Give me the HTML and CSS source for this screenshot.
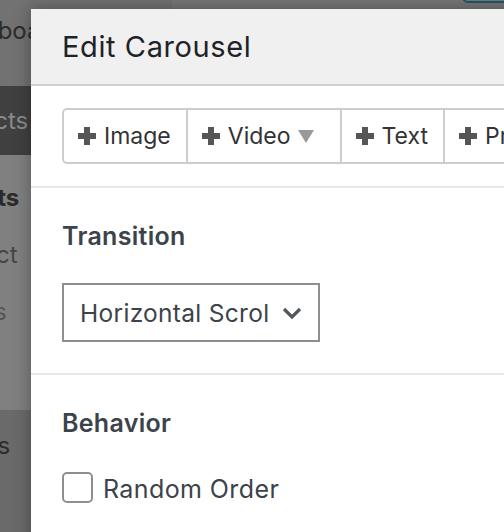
FILE: index.html
```html
<!DOCTYPE html>
<html lang="en">
<head>
<meta charset="utf-8">
<title>Edit Carousel</title>
<link rel="stylesheet" href="styles.css">
</head>
<body>
<div class="screen">
  <div class="admin">
    <aside class="sidebar">
      <div class="menu-item dash"><span class="lbl lbl-dash">Dashboard</span></div>
      <div class="menu-item current"><span class="lbl lbl-prod">Products</span></div>
      <div class="submenu">
        <div class="sub-item strong"><span class="lbl lbl-all">All Products</span></div>
        <div class="sub-item mid"><span class="lbl lbl-add">Add Product</span></div>
        <div class="sub-item light"><span class="lbl lbl-tags">Tags</span></div>
      </div>
      <div class="menu-item after"><span class="lbl lbl-pages">Pages</span></div>
    </aside>
    <main class="content">
      <div class="topbar"><span class="publish"></span></div>
    </main>
  </div>

  <div class="modal">
    <header class="modal-header">
      <h1 class="modal-title">Edit Carousel</h1>
    </header>

    <div class="toolbar-section">
      <div class="toolbar">
        <div class="tool tool-image">
          <svg class="plus" viewBox="0 0 18 18" width="18" height="18"><path d="M6 0h6v6h6v6h-6v6h-6v-6h-6v-6h6z"/></svg>
          <span>Image</span>
        </div>
        <div class="tool tool-video">
          <svg class="plus" viewBox="0 0 18 18" width="18" height="18"><path d="M6 0h6v6h6v6h-6v6h-6v-6h-6v-6h6z"/></svg>
          <span>Video</span>
          <svg class="caret" viewBox="0 0 16 13" width="16" height="13"><path d="M0 0h16l-8 13z"/></svg>
        </div>
        <div class="tool tool-text">
          <svg class="plus" viewBox="0 0 18 18" width="18" height="18"><path d="M6 0h6v6h6v6h-6v6h-6v-6h-6v-6h6z"/></svg>
          <span>Text</span>
        </div>
        <div class="tool tool-product">
          <svg class="plus" viewBox="0 0 18 18" width="18" height="18"><path d="M6 0h6v6h6v6h-6v6h-6v-6h-6v-6h6z"/></svg>
          <span>Product</span>
        </div>
      </div>
    </div>

    <section class="section">
      <h2 class="section-title">Transition</h2>
      <div class="select">
        <span class="select-value">Horizontal Scrolling</span>
        <svg class="chevron" viewBox="0 0 20 14" width="20" height="14"><path d="M2 3l8 8 8-8" fill="none" stroke="#50575e" stroke-width="3.2"/></svg>
      </div>
    </section>

    <section class="section last">
      <h2 class="section-title">Behavior</h2>
      <label class="check-row">
        <span class="check"></span>
        <span class="check-label">Random Order</span>
      </label>
    </section>
  </div>
</div>
</body>
</html>
```

FILE: styles.css
```css
* { box-sizing: border-box; }

body {
  margin: 0;
  font-family: Inter, "Noto Sans", sans-serif;
}

.screen {
  position: relative;
  width: 504px;
  height: 532px;
  overflow: hidden;
  background: #777;
}

.admin {
  display: flex;
  height: 100%;
}

/* left admin menu, dimmed by the modal backdrop */
.sidebar {
  flex: 0 0 242px;
  margin-left: -70px;
  display: flex;
  flex-direction: column;
  background: #6c6c6c;
  font-size: 24px;
  line-height: 28px;
  white-space: nowrap;
}

.menu-item {
  display: flex;
  color: #2c2c2c;
}

.dash {
  height: 86px;
  padding-top: 17px;
  background: #727272;
}

.current {
  height: 69px;
  align-items: center;
  background: #404040;
  color: #8a8a8a;
}

.submenu {
  height: 255px;
  padding-top: 14px;
  background: #808080;
}

.sub-item {
  display: flex;
  align-items: center;
  height: 57px;
}

.strong { font-weight: 700; color: #2a2a2a; }
.mid { color: #454545; }
.light { color: #555; }

.after {
  flex: 1;
  padding-top: 22px;
  background: #6a6a6a;
}

.lbl-dash { margin-left: 10px; }
.lbl-prod { margin-left: -3px; }
.lbl-all { margin-left: -53px; }
.lbl-add { margin-left: -54px; }
.lbl-tags { margin-left: 22px; }
.lbl-pages { margin-left: 10px; }

.content {
  flex: 1;
  background: #777;
}

.topbar {
  height: 9px;
  display: flex;
  justify-content: flex-end;
}

.publish {
  display: block;
  width: 52px;
  height: 24px;
  margin-top: -21px;
  margin-right: -10px;
  border: 2px solid #1b5a6b;
  border-radius: 6px;
  background: #777;
}

/* modal */
.modal {
  position: absolute;
  left: 31px;
  top: 9px;
  width: 540px;
  height: 560px;
  background: #fff;
  color: #3c434a;
  box-shadow: 0 0 16px rgba(0, 0, 0, 0.35);
}

.modal-header {
  background: #f0f0f0;
  border-bottom: 2px solid #cfcfcf;
}

.modal-title {
  margin: 0;
  padding-left: 31px;
  font-size: 29px;
  font-weight: 400;
  letter-spacing: 0.6px;
  line-height: 75px;
  color: #1d2327;
}

.toolbar-section {
  padding: 22px 31px;
  border-bottom: 2px solid #e8e8e8;
}

.toolbar {
  display: flex;
  width: max-content;
  height: 56px;
  border: 2px solid #cdcdcd;
  border-radius: 5px;
}

.tool {
  display: flex;
  align-items: center;
  gap: 8px;
  padding: 0 15px 0 14px;
  font-size: 23px;
  color: #333;
}

.tool + .tool { border-left: 2px solid #cdcdcd; }

.tool-video { padding-right: 26px; }

.plus { fill: #555; flex: none; }

.caret { fill: #999; flex: none; margin-left: -1px; }

.section {
  padding: 32px 31px 31px;
  border-bottom: 2px solid #e8e8e8;
}

.section.last { border-bottom: 0; }

.section-title {
  margin: 0 0 31px;
  font-size: 25px;
  font-weight: 600;
  letter-spacing: 0.3px;
  line-height: 32px;
  color: #3c434a;
}

.select {
  display: flex;
  align-items: center;
  gap: 14px;
  width: 258px;
  height: 59px;
  padding: 0 0 0 16px;
  border: 2px solid #8c8f94;
  font-size: 24.5px;
  letter-spacing: 0.3px;
  color: #3c434a;
}

.select-value {
  flex: none;
  width: 188px;
  overflow: hidden;
  white-space: nowrap;
}

.chevron { flex: none; }

.check-row {
  display: flex;
  align-items: center;
  gap: 10px;
  font-size: 25px;
  letter-spacing: 0.4px;
  color: #3c434a;
}

.check-label { margin-top: 4px; }

.check {
  flex: none;
  width: 31px;
  height: 31px;
  border: 2px solid #8c8f94;
  border-radius: 5px;
  background: #fff;
}
```
